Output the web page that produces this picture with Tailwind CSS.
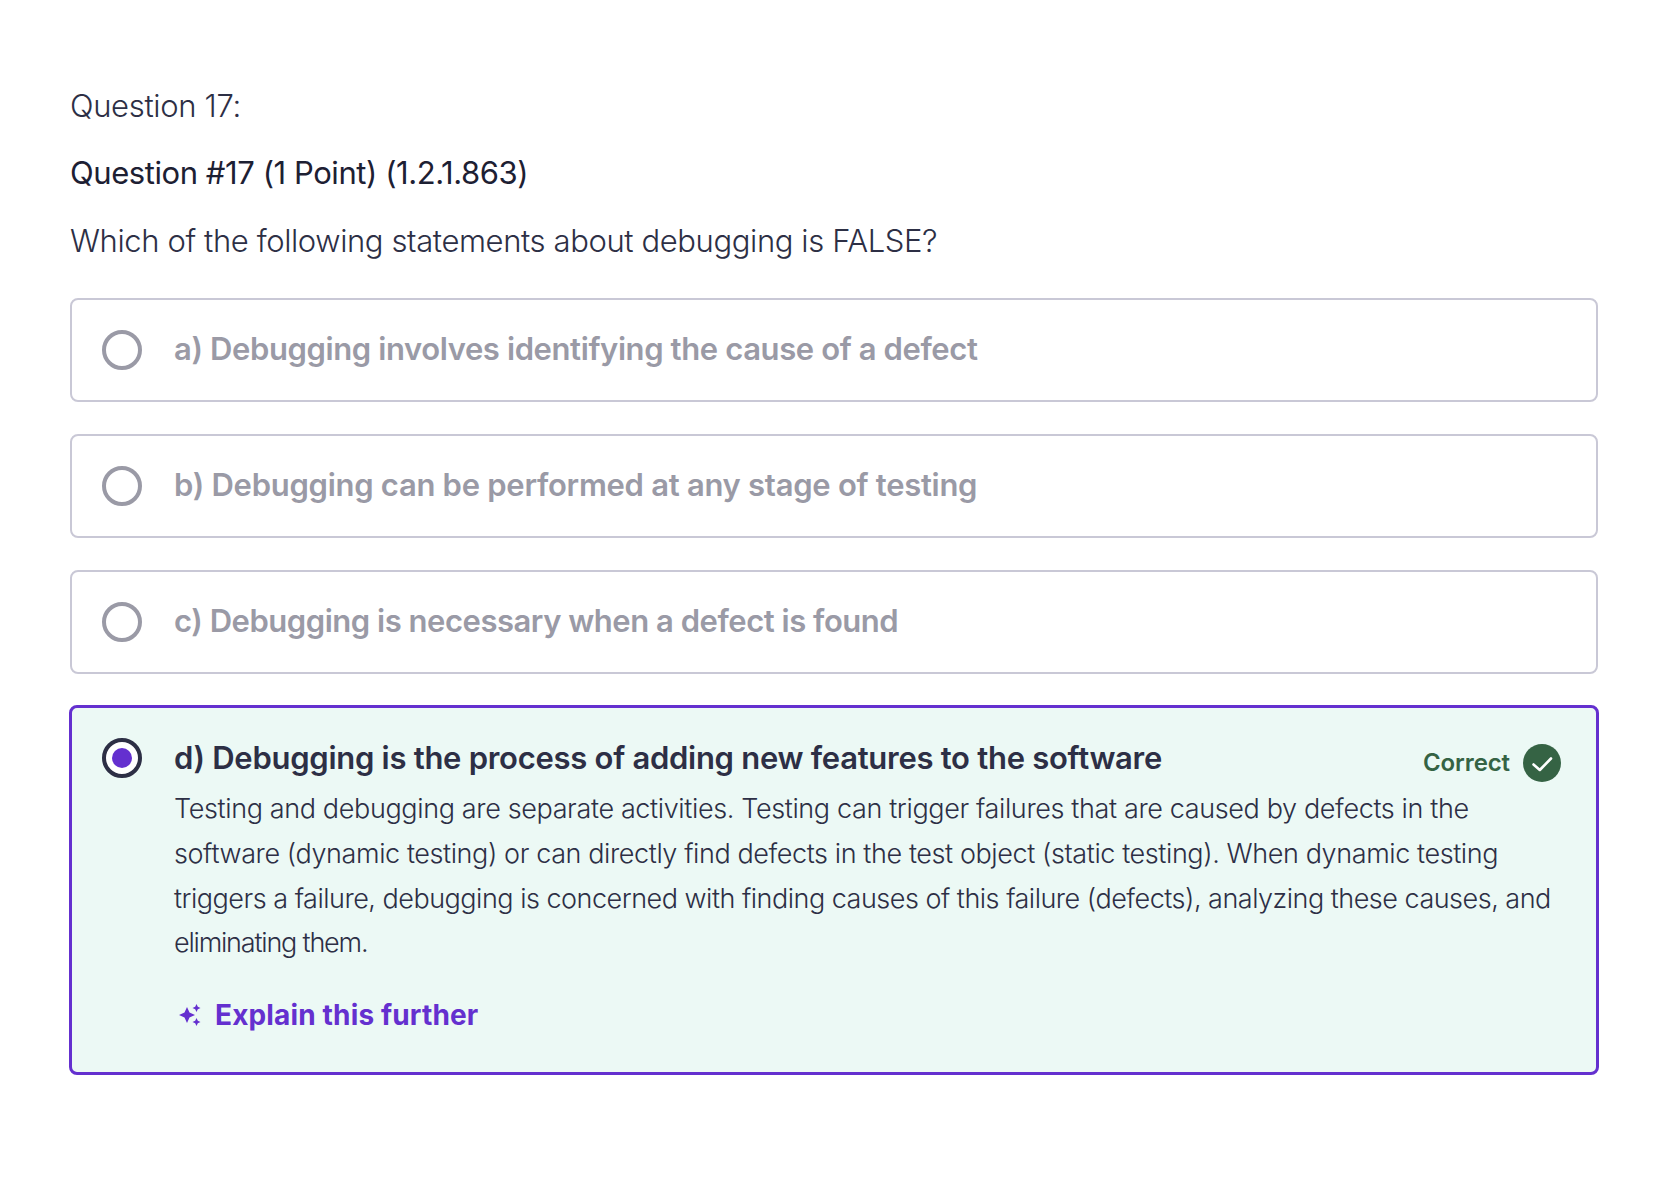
<!DOCTYPE html>
<html lang="en">
<head>
    <meta charset="UTF-8">
    <script src="https://cdn.jsdelivr.net/npm/@tailwindcss/browser@4"></script>
    <title>Question 17</title>
</head>
<body class="bg-white font-['Inter',sans-serif] text-[#2d2f45]">
    <div class="pl-[70px] pr-[62px] pt-[86px]">
        <p class="text-[31px] leading-[40px] font-light tracking-[-0.33px]">Question 17:</p>
        <p class="mt-[27px] text-[31px] leading-[40px] font-normal text-[#1d2033] tracking-[-0.43px]">Question #17 (1 Point) (1.2.1.863)</p>
        <p class="mt-[28px] text-[31px] leading-[40px] font-light tracking-[-0.39px]">Which of the following statements about debugging is FALSE?</p>

        <div class="mt-[37px] flex flex-col gap-[32px]">
            <div class="flex items-center h-[104px] rounded-lg border-2 border-[#c9c8d6] pl-[30px]">
                <span class="w-[40px] h-[40px] rounded-full border-4 border-[#9a9aa6] shrink-0"></span>
                <span class="ml-[32px] mb-[2px] text-[31px] font-semibold text-[#9a9aa6] tracking-[-0.39px]">a) Debugging involves identifying the cause of a defect</span>
            </div>
            <div class="flex items-center h-[104px] rounded-lg border-2 border-[#c9c8d6] pl-[30px]">
                <span class="w-[40px] h-[40px] rounded-full border-4 border-[#9a9aa6] shrink-0"></span>
                <span class="ml-[32px] mb-[2px] text-[31px] font-semibold text-[#9a9aa6] tracking-[-0.28px]">b) Debugging can be performed at any stage of testing</span>
            </div>
            <div class="flex items-center h-[104px] rounded-lg border-2 border-[#c9c8d6] pl-[30px]">
                <span class="w-[40px] h-[40px] rounded-full border-4 border-[#9a9aa6] shrink-0"></span>
                <span class="ml-[32px] mb-[2px] text-[31px] font-semibold text-[#9a9aa6] tracking-[-0.47px]">c) Debugging is necessary when a defect is found</span>
            </div>

            <div class="flex rounded-lg border-[3px] border-[#6430cf] bg-[#ecf9f5] pl-[30px] pr-[35px] pt-[28px] h-[370px] -mt-px -mx-px">
                <span class="mt-[2px] w-[40px] h-[40px] rounded-full border-4 border-[#2d2f45] bg-white shrink-0 flex items-center justify-center">
                    <span class="w-[20px] h-[20px] rounded-full bg-[#6430cf]"></span>
                </span>
                <div class="ml-[32px] flex-1">
                    <div class="flex justify-between items-center h-[45px]">
                        <span class="text-[31px] font-semibold tracking-[-0.28px]">d) Debugging is the process of adding new features to the software</span>
                        <span class="flex items-center gap-[13px] mt-[8px]">
                            <span class="text-[24px] font-semibold text-[#356344] tracking-[-0.1px]">Correct</span>
                            <svg width="38" height="38" viewBox="0 0 38 38"><circle cx="19" cy="19" r="19" fill="#356344"/><path d="M10.5 20.5L16.8 26 28 14.5" fill="none" stroke="#fff" stroke-width="2.6" stroke-linecap="round" stroke-linejoin="round"/></svg>
                        </span>
                    </div>
                    <p class="mt-[6px] text-[27px] leading-[44.8px] font-light tracking-[-0.41px] whitespace-nowrap"><span class="tracking-[-0.37px]">Testing and debugging are separate activities. Testing can trigger failures that are caused by defects in the</span><br>software (dynamic testing) or can directly find defects in the test object (static testing). When dynamic testing<br><span class="tracking-[-0.5px]">triggers a failure, debugging is concerned with finding causes of this failure (defects), analyzing these causes, and</span><br><span class="tracking-[-1.2px]">eliminating them.</span></p>
                    <div class="mt-[28px] flex items-center gap-[14px] pl-[5px]">
                        <svg width="22" height="22" viewBox="0 0 22 22" fill="#6430cf"><path d="M8 3L10.5 8.5 16 11 10.5 13.5 8 19 5.5 13.5 0 11 5.5 8.5z"/><path d="M17.5 0L18.8 2.7 21.5 4 18.8 5.3 17.5 8 16.2 5.3 13.5 4 16.2 2.7z"/><path d="M17.5 14L18.8 16.7 21.5 18 18.8 19.3 17.5 22 16.2 19.3 13.5 18 16.2 16.7z"/></svg>
                        <span class="text-[28px] font-bold text-[#6430cf] tracking-[0.15px]">Explain this further</span>
                    </div>
                </div>
            </div>
        </div>
    </div>
</body>
</html>
